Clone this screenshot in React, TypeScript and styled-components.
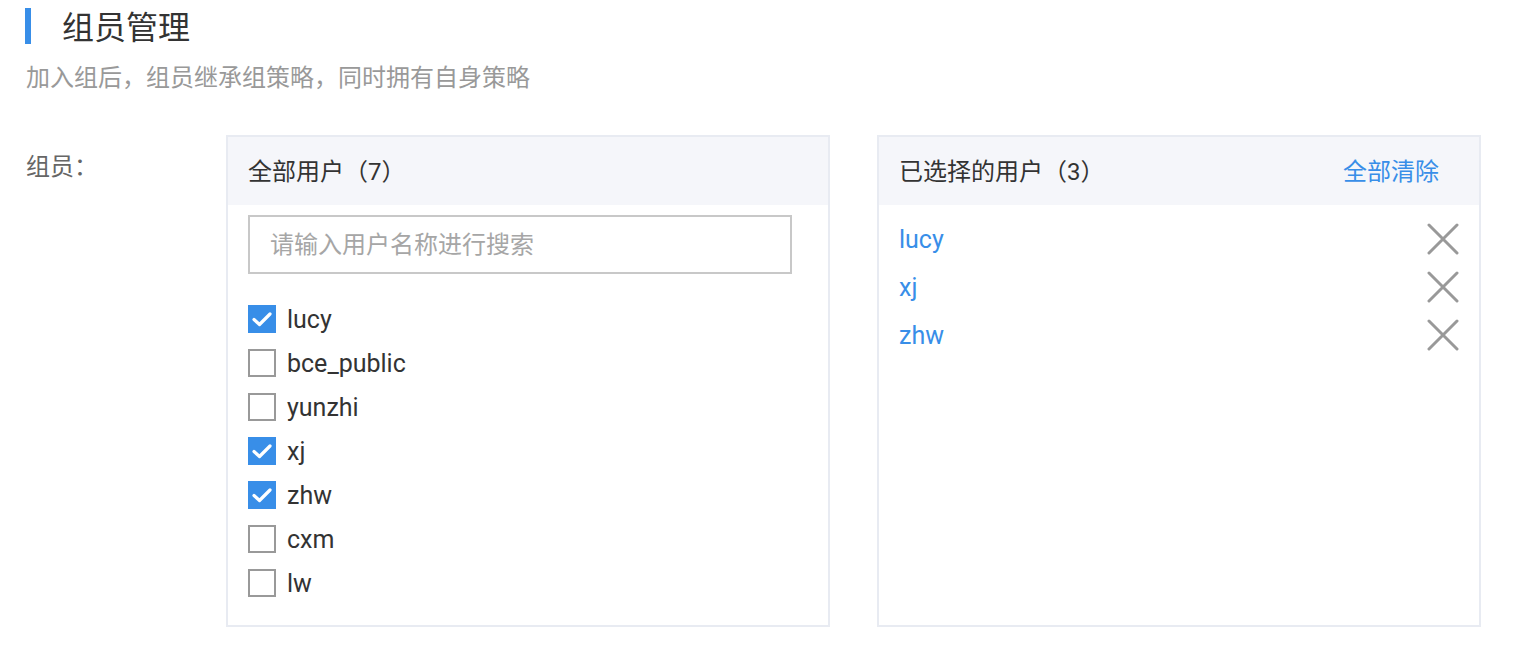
import { useState } from "react";
import styled, { createGlobalStyle } from "styled-components";

const GlobalStyle = createGlobalStyle`
  body {
    margin: 0;
    background: #fff;
    font-family: Roboto, "Noto Sans CJK SC", sans-serif;
  }
`;

const Page = styled.div`
  padding: 8px 26px 0 26px;
`;

const TitleRow = styled.div`
  display: flex;
  align-items: center;
  height: 36px;
`;

const TitleBar = styled.span`
  width: 6px;
  height: 36px;
  margin-left: -1px;
  background: #388ee8;
`;

const Title = styled.h1`
  margin: 3px 0 0 31px;
  font-size: 32px;
  font-weight: 400;
  color: #333;
  line-height: 36px;
`;

const SubTitle = styled.p`
  margin: 18px 0 0 0;
  font-size: 24px;
  line-height: 32px;
  color: #999;
`;

const FormRow = styled.div`
  display: flex;
  margin-top: 41px;
`;

const FormLabel = styled.div`
  width: 200px;
  padding-top: 16px;
  font-size: 24px;
  line-height: 32px;
  color: #666;
`;

const Panels = styled.div`
  display: flex;
  gap: 47px;
`;

const Panel = styled.div`
  width: 600px;
  height: 488px;
  border: 2px solid #e8ebf2;
  display: flex;
  flex-direction: column;
`;

const PanelHeader = styled.div`
  height: 68px;
  box-sizing: border-box;
  padding: 0 40px 3px 20px;
  background: #f5f6fa;
  display: flex;
  align-items: center;
  justify-content: space-between;
  font-size: 24px;
  color: #333;
`;

const ClearAll = styled.span`
  color: #388ee8;
  cursor: pointer;
`;

const PanelBody = styled.div`
  padding: 10px 20px 0 20px;
`;

const SearchInput = styled.input`
  width: 544px;
  height: 59px;
  box-sizing: border-box;
  border: 2px solid #c8c8c8;
  padding: 0 20px;
  font-size: 24px;
  font-family: inherit;
  color: #333;
  outline: none;

  &::placeholder {
    color: #a6a6a6;
  }
`;

const CheckList = styled.ul`
  list-style: none;
  margin: 23px 0 0 0;
  padding: 0;
`;

const CheckRow = styled.li`
  display: flex;
  align-items: center;
  height: 44px;
  gap: 11px;
  font-size: 25px;
  color: #333;
  cursor: pointer;
`;

const CheckBox = styled.span<{ $checked?: boolean }>`
  width: 28px;
  height: 28px;
  box-sizing: border-box;
  display: flex;
  align-items: center;
  justify-content: center;
  border: 2px solid ${(props) => (props.$checked ? "#388ee8" : "#999")};
  background: ${(props) => (props.$checked ? "#388ee8" : "#fff")};
`;

const SelectedList = styled.ul`
  list-style: none;
  margin: 0;
  padding: 0;
`;

const SelectedRow = styled.li`
  display: flex;
  align-items: center;
  justify-content: space-between;
  height: 48px;
  font-size: 25px;
  color: #388ee8;
`;

const RemoveBtn = styled.span`
  display: flex;
  cursor: pointer;
`;

const CheckMark = () => (
  <svg width="20" height="16" viewBox="0 0 20 16">
    <path
      d="M2 8.5 L7.5 13.5 L18 3"
      fill="none"
      stroke="#fff"
      strokeWidth="3.2"
      strokeLinecap="round"
      strokeLinejoin="round"
    />
  </svg>
);

const CrossIcon = () => (
  <svg width="32" height="32" viewBox="0 0 32 32">
    <path
      d="M2 2 L30 30 M30 2 L2 30"
      stroke="#999"
      strokeWidth="3"
      strokeLinecap="round"
    />
  </svg>
);

const ALL_USERS = ["lucy", "bce_public", "yunzhi", "xj", "zhw", "cxm", "lw"];

const App = () => {
  const [search, setSearch] = useState("");
  const [selected, setSelected] = useState<string[]>(["lucy", "xj", "zhw"]);

  const toggleUser = (name: string) => {
    setSelected((prev) =>
      prev.includes(name) ? prev.filter((n) => n !== name) : [...prev, name]
    );
  };

  const visibleUsers = ALL_USERS.filter((u) => u.includes(search.trim()));
  const selectedUsers = ALL_USERS.filter((u) => selected.includes(u));

  return (
    <>
      <GlobalStyle />
      <Page>
        <TitleRow>
          <TitleBar />
          <Title>组员管理</Title>
        </TitleRow>
        <SubTitle>加入组后，组员继承组策略，同时拥有自身策略</SubTitle>

        <FormRow>
          <FormLabel>组员：</FormLabel>
          <Panels>
            <Panel>
              <PanelHeader>全部用户（{ALL_USERS.length}）</PanelHeader>
              <PanelBody>
                <SearchInput
                  placeholder="请输入用户名称进行搜索"
                  value={search}
                  onChange={(e) => setSearch(e.target.value)}
                />
                <CheckList>
                  {visibleUsers.map((user) => (
                    <CheckRow key={user} onClick={() => toggleUser(user)}>
                      <CheckBox $checked={selected.includes(user)}>
                        {selected.includes(user) && <CheckMark />}
                      </CheckBox>
                      {user}
                    </CheckRow>
                  ))}
                </CheckList>
              </PanelBody>
            </Panel>

            <Panel>
              <PanelHeader>
                已选择的用户（{selectedUsers.length}）
                <ClearAll onClick={() => setSelected([])}>全部清除</ClearAll>
              </PanelHeader>
              <PanelBody>
                <SelectedList>
                  {selectedUsers.map((user) => (
                    <SelectedRow key={user}>
                      {user}
                      <RemoveBtn onClick={() => toggleUser(user)}>
                        <CrossIcon />
                      </RemoveBtn>
                    </SelectedRow>
                  ))}
                </SelectedList>
              </PanelBody>
            </Panel>
          </Panels>
        </FormRow>
      </Page>
    </>
  );
};

export default App;
